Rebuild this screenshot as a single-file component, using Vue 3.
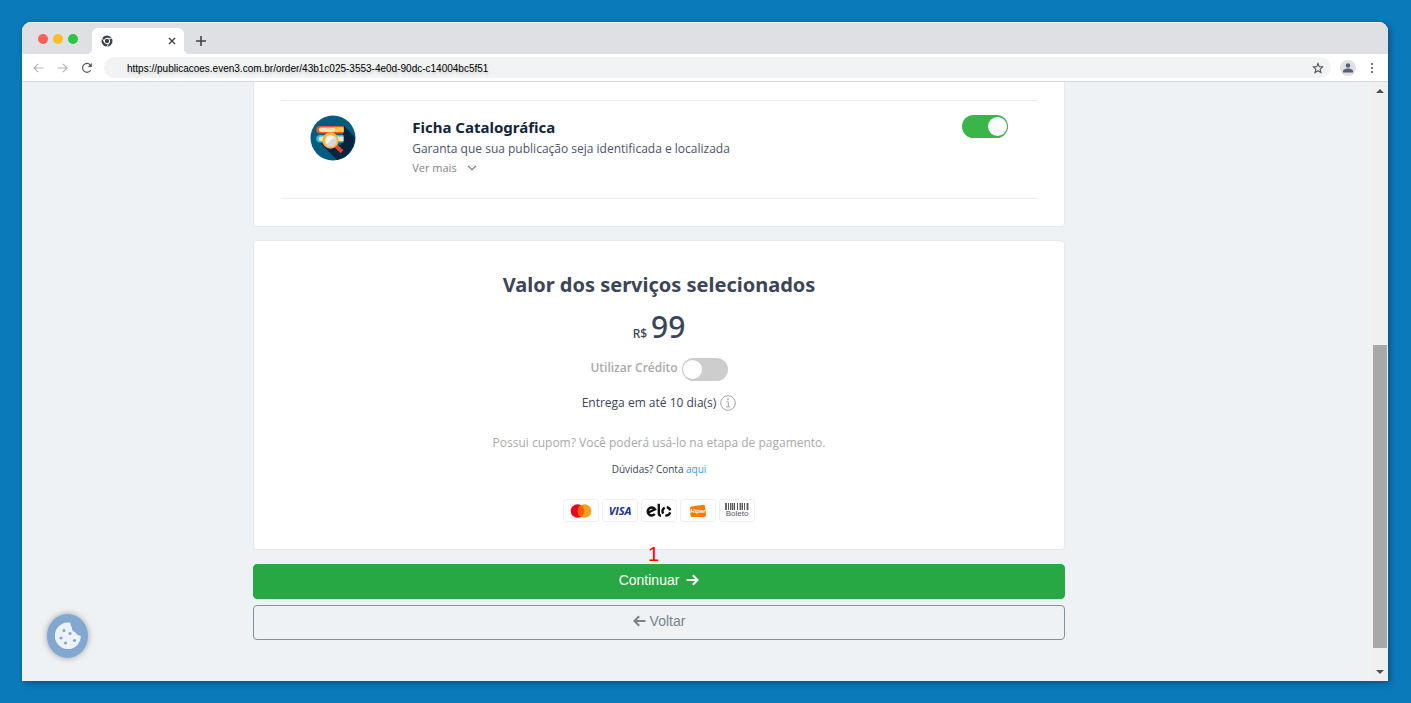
<script setup>
import { ref } from 'vue'

const url = ref('https://publicacoes.even3.com.br/order/43b1c025-3553-4e0d-90dc-c14004bc5f51')
const catalogCard = ref(true)
const useCredit = ref(false)
</script>

<template>
  <div class="desktop">
    <div class="window">
      <header class="tabbar">
        <div class="lights">
          <span class="light red"></span>
          <span class="light yellow"></span>
          <span class="light green"></span>
        </div>
        <div class="tab">
          <svg class="chrome" viewBox="0 0 24 24" aria-hidden="true">
            <circle cx="12" cy="12" r="11" fill="#3f4246" />
            <circle cx="12" cy="12" r="5.4" fill="none" stroke="#fff" stroke-width="2" />
            <path d="M12 6.6H22M7.3 14.8L2.4 6.3M16.7 14.8L11.6 23" stroke="#fff" stroke-width="1.8" />
          </svg>
          <button class="icon-btn" aria-label="Fechar guia">
            <svg width="8" height="8" viewBox="0 0 8 8"><path d="M1 1L7 7M7 1L1 7" stroke="#3f4246" stroke-width="1.4" /></svg>
          </button>
        </div>
        <button class="icon-btn new-tab" aria-label="Nova guia">
          <svg width="10" height="10" viewBox="0 0 10 10"><path d="M5 0V10M0 5H10" stroke="#3f4246" stroke-width="1.6" /></svg>
        </button>
      </header>

      <div class="toolbar">
        <nav class="nav">
          <button class="icon-btn" aria-label="Voltar página">
            <svg width="11" height="10" viewBox="0 0 11 10"><path d="M10.500 5H1.200M5.200 .8L1 5L5.200 9.200" fill="none" stroke="#b4b6b9" stroke-width="1.200" /></svg>
          </button>
          <button class="icon-btn" aria-label="Avançar página">
            <svg width="11" height="10" viewBox="0 0 11 10"><path d="M.5 5H9.800M5.800 .8L10 5L5.800 9.200" fill="none" stroke="#b4b6b9" stroke-width="1.200" /></svg>
          </button>
          <button class="icon-btn" aria-label="Recarregar">
            <svg width="12" height="12" viewBox="0 0 12 12"><path d="M9.700 8.200A4.400 4.400 0 1 1 9.300 3" fill="none" stroke="#55585c" stroke-width="1.200" /><path d="M10.800 1V5H6.800Z" fill="#55585c" /></svg>
          </button>
        </nav>
        <div class="address">
          <input v-model="url" class="url" type="text" aria-label="Endereço" />
          <button class="icon-btn" aria-label="Favoritar">
            <svg width="12" height="12" viewBox="0 0 24 24"><path d="M12 3L14.600 9.300L21.500 9.900L16.300 14.400L17.900 21.100L12 17.500L6.100 21.100L7.700 14.400L2.500 9.900L9.400 9.300Z" fill="none" stroke="#55585c" stroke-width="2.200" /></svg>
          </button>
        </div>
        <button class="icon-btn avatar" aria-label="Perfil">
          <svg width="10" height="10" viewBox="0 0 10 10"><circle cx="5" cy="2.500" r="2.200" fill="#555f78" /><path d="M0 9.500V8C0 6.300 3 5.400 5 5.400S10 6.300 10 8V9.500Z" fill="#555f78" /></svg>
        </button>
        <button class="icon-btn" aria-label="Menu">
          <svg width="4" height="12" viewBox="0 0 4 12"><circle cx="2" cy="2" r="1.100" fill="#55585c" /><circle cx="2" cy="6" r="1.100" fill="#55585c" /><circle cx="2" cy="10" r="1.100" fill="#55585c" /></svg>
        </button>
      </div>

      <div class="viewport">
        <main class="content">
          <section class="card services">
            <article class="service">
              <svg class="service-icon" viewBox="0 0 46 46" aria-hidden="true">
                <circle cx="23" cy="23" r="22.500" fill="#025b80" />
                <path d="M34 11L44.800 22A22.500 22.500 0 0 1 27 45L10 28L31 30Z" fill="#042440" />
                <path d="M10 11H33.500V18.500H10A3.700 3.700 0 0 1 10 11Z" fill="#e8552f" />
                <path d="M11 12.500H33.500V17H11A2.200 2.200 0 0 1 11 12.500Z" fill="#ffe0a6" />
                <path d="M25 12.500H33.500V17H25Z" fill="#ffc84a" />
                <path d="M10 20H33.500V27.500H10A3.700 3.700 0 0 1 10 20Z" fill="#31bfe0" />
                <path d="M11 21.500H33.500V26H11A2.200 2.200 0 0 1 11 21.500Z" fill="#ffe8b8" />
                <path d="M25 30L32 36.800" stroke="#d94b2b" stroke-width="4" />
                <circle cx="20.500" cy="25.500" r="6.800" fill="#f6f4f0" stroke="#ffb52e" stroke-width="2.800" />
                <path d="M25 21L16 30A6 6 0 0 0 25 21Z" fill="#d9d7d8" />
              </svg>
              <div class="service-text">
                <h2><label for="ficha">Ficha Catalográfica</label></h2>
                <p>Garanta que sua publicação seja identificada e localizada</p>
                <button class="more">
                  Ver mais
                  <svg width="10" height="6" viewBox="0 0 10 6"><path d="M1 .8L5 4.800L9 .8" fill="none" stroke="#8a9099" stroke-width="1.500" /></svg>
                </button>
              </div>
              <input id="ficha" v-model="catalogCard" class="toggle" type="checkbox" role="switch" />
            </article>
          </section>

          <section class="card summary">
            <h1>Valor dos serviços selecionados</h1>
            <div class="price"><span class="currency">R$</span><span>99</span></div>
            <div class="credit">
              <label for="credito">Utilizar Crédito</label>
              <input id="credito" v-model="useCredit" class="toggle" type="checkbox" role="switch" />
            </div>
            <p class="delivery">
              Entrega em até 10 dia(s)
              <svg width="16" height="16" viewBox="0 0 16 16" aria-hidden="true"><circle cx="8" cy="8" r="7.300" fill="none" stroke="#a3a3a3" /><path d="M6.300 6.800H8.300V11.800M6 11.800H10.300" fill="none" stroke="#a3a3a3" /><circle cx="8" cy="4.300" r=".9" fill="#a3a3a3" /></svg>
            </p>
            <p class="coupon">Possui cupom? Você poderá usá-lo na etapa de pagamento.</p>
            <p class="help">Dúvidas? Conta <a href="#">aqui</a></p>
            <ul class="payments">
              <li aria-label="Mastercard">
                <svg width="22" height="14" viewBox="0 0 22 14"><circle cx="7.500" cy="7" r="6.800" fill="#eb001b" /><circle cx="14.500" cy="7" r="6.800" fill="#f79e1b" /><path d="M11 1.200A6.800 6.800 0 0 1 11 12.800A6.800 6.800 0 0 1 11 1.200Z" fill="#ff5f00" /></svg>
              </li>
              <li><span class="visa">VISA</span></li>
              <li aria-label="Elo">
                <svg width="26" height="15" viewBox="0 0 26 15" fill="none" stroke="#111" stroke-width="2.400">
                  <path d="M1.800 9.800L9 6.200A4 4 0 1 0 8.800 11" />
                  <path d="M12.800 .8V10.200Q12.800 12.500 15 12.700" />
                  <path d="M17.200 10.600A4.200 4.200 0 0 1 18.700 4.600M20.800 4.300A4.200 4.200 0 0 1 24.200 7.300M24.200 9.400A4.200 4.200 0 0 1 19.300 12.400" />
                </svg>
              </li>
              <li class="hiper">
                <svg width="18" height="14" viewBox="0 0 18 14" aria-hidden="true"><path d="M2.500 2.600L14 .7Q15.700 .5 16 2L17 11Q17 12.700 15.500 12.900H3Q1.600 12.900 1.400 11.500L.9 4.600Q.9 2.900 2.500 2.600Z" fill="#ff7a00" /></svg>
                <span>Hiper</span>
              </li>
              <li class="boleto">
                <svg width="24" height="7" viewBox="0 0 24 7" stroke="#56585b"><path d="M1 0V7M7.500 0V7M15.500 0V7M22.500 0V7" stroke-width="1.800" /><path d="M3.500 0V7M5.500 0V7M9.500 0V7M12.500 0V7M17.500 0V7M19.500 0V7" stroke-width="1" /></svg>
                <span>Boleto</span>
              </li>
            </ul>
          </section>

          <div class="actions">
            <span class="marker">1</span>
            <button class="btn primary">
              Continuar
              <svg width="13" height="12" viewBox="0 0 13 12"><path d="M.5 6H11.500M6.800 1.200L11.600 6L6.800 10.800" fill="none" stroke="currentColor" stroke-width="2" /></svg>
            </button>
            <button class="btn outline">
              <svg width="13" height="12" viewBox="0 0 13 12"><path d="M12.500 6H1.500M6.200 1.200L1.400 6L6.200 10.800" fill="none" stroke="currentColor" stroke-width="2" /></svg>
              Voltar
            </button>
          </div>
        </main>

        <button class="cookie" aria-label="Preferências de cookies">
          <svg width="26" height="28" viewBox="0 0 26 28">
            <path d="M15.500 .8A13 13.300 0 1 0 25.800 14Q22 13.500 20.500 10.500Q16.500 9.500 17 5.500Q15 3.500 15.500 .8Z" fill="#edf2f6" />
            <g fill="#82a8d1"><circle cx="9" cy="8.500" r="1.600" /><circle cx="15" cy="11.500" r="1.600" /><circle cx="6" cy="16" r="1.600" /><circle cx="10.500" cy="21" r="1.600" /><circle cx="19.500" cy="18.500" r="1.600" /></g>
          </svg>
        </button>

        <div class="scrollbar" aria-hidden="true">
          <svg class="arrow" viewBox="0 0 16 17"><path d="M4 11L8 7L12 11Z" fill="#505050" /></svg>
          <span class="before"></span>
          <span class="thumb"></span>
          <span class="after"></span>
          <svg class="arrow" viewBox="0 0 16 17"><path d="M4 6L8 10L12 6Z" fill="#505050" /></svg>
        </div>
      </div>
    </div>
  </div>
</template>

<style>
body {
  margin: 0;
}
</style>

<style scoped>
* {
  box-sizing: border-box;
}
h1, h2, p, ul {
  margin: 0;
  padding: 0;
}
button {
  font-family: inherit;
  cursor: pointer;
}
svg {
  display: block;
  flex: none;
}
.desktop {
  display: flex;
  min-height: 100vh;
  padding: 22px 23px 22px 22px;
  background: #0b7aba;
  font-family: "Open Sans", "Noto Sans", sans-serif;
}
.window {
  flex: 1;
  display: flex;
  flex-direction: column;
  overflow: hidden;
  border-radius: 9px 9px 0 0;
  background: #fff;
  box-shadow: 2px 2px 6px rgba(0, 0, 0, 0.35);
}
.icon-btn {
  display: flex;
  align-items: center;
  justify-content: center;
  padding: 0;
  border: 0;
  background: none;
}
.tabbar {
  display: flex;
  height: 32px;
  border-top: 1px solid #eff0f2;
  background: #dee0e4;
}
.lights {
  display: flex;
  gap: 5px;
  padding: 11px 14px 0 16px;
}
.light {
  width: 10px;
  height: 10px;
  border-radius: 50%;
}
.red { background: #ff5f57; }
.yellow { background: #febb2e; }
.green { background: #28c840; }
.tab {
  position: relative;
  display: flex;
  align-items: center;
  justify-content: space-between;
  width: 92px;
  margin-top: 5px;
  padding: 0 8px 0 9px;
  border-radius: 6px 6px 0 0;
  background: #fff;
}
.tab::before,
.tab::after {
  content: "";
  position: absolute;
  bottom: 0;
  width: 5px;
  height: 5px;
}
.tab::before {
  right: 100%;
  background: radial-gradient(circle at 0 0, #dee0e4 5px, #fff 5px);
}
.tab::after {
  left: 100%;
  background: radial-gradient(circle at 100% 0, #dee0e4 5px, #fff 5px);
}
.chrome {
  width: 12px;
  height: 12px;
}
.new-tab {
  margin: 5px 0 0 12px;
}
.toolbar {
  display: flex;
  align-items: center;
  height: 28px;
  padding-right: 14px;
  border-bottom: 1px solid #d5d7d9;
}
.nav {
  display: flex;
  align-items: center;
  gap: 13px;
  width: 82px;
  padding-left: 11px;
}
.address {
  flex: 1;
  display: flex;
  align-items: center;
  height: 21px;
  margin-right: 9px;
  padding: 0 7px 0 23px;
  border-radius: 11px;
  background: #f1f3f5;
}
.url {
  flex: 1;
  min-width: 0;
  padding: 2px 0 0;
  border: 0;
  outline: 0;
  background: none;
  color: #000;
  font: 10px/18px "Liberation Sans", Arial, sans-serif;
  text-shadow: 1px 2px 2px rgba(0, 0, 0, 0.15);
}
.avatar {
  width: 16px;
  height: 16px;
  margin-right: 14px;
  border-radius: 50%;
  background: #dee0e4;
}
.viewport {
  position: relative;
  flex: 1;
  display: flex;
  justify-content: space-between;
  background: #eef2f5;
}
.content {
  width: calc(60% - 8px);
  margin-left: calc(17% - 1px);
}
.card {
  border: 1px solid #e6eaef;
  border-radius: 4px;
  background: #fff;
}
.services {
  padding: 18px 27px 27px;
  border-top: 0;
  border-radius: 0 0 4px 4px;
}
.service {
  display: flex;
  align-items: flex-start;
  height: 99px;
  padding: 14px 29px 0;
  border-top: 1px solid #e8ecf0;
  border-bottom: 1px solid #e8ecf0;
}
.service-icon {
  width: 46px;
  height: 46px;
}
.service-text {
  flex: 1;
  margin-left: 56px;
}
h1, h2, .price {
  font-family: "Noto Sans", "Open Sans", sans-serif;
}
h2 {
  color: #12263a;
  font-size: 15px;
  font-weight: 700;
  line-height: 24px;
}
.service-text p {
  color: #4a5568;
  font-size: 12px;
  line-height: 20px;
}
.more {
  display: flex;
  align-items: center;
  gap: 10px;
  padding: 0;
  border: 0;
  background: none;
  color: #838383;
  font-size: 11px;
  line-height: 18px;
}
.toggle {
  appearance: none;
  flex: none;
  display: flex;
  align-items: center;
  width: 46px;
  height: 23px;
  margin: 0;
  padding: 1px;
  border-radius: 12px;
  background: #cdcdcd;
}
.toggle::before {
  content: "";
  width: 19px;
  height: 19px;
  border-radius: 50%;
  background: #fff;
}
.toggle:checked {
  justify-content: flex-end;
  background: #39b54a;
}
.summary {
  display: flex;
  flex-direction: column;
  align-items: center;
  margin-top: 13px;
  padding: 26px 16px 27px;
  color: #3b4558;
}
h1 {
  font-size: 20px;
  font-weight: 700;
  line-height: 36px;
}
.price {
  display: flex;
  align-items: baseline;
  gap: 4px;
  height: 48px;
  font-size: 30px;
  font-weight: 500;
  line-height: 48px;
}
.currency {
  font-size: 12px;
}
.credit {
  display: flex;
  gap: 4px;
  margin-top: 7px;
  color: #a9a9a9;
  font-size: 12px;
  font-weight: 600;
  line-height: 20px;
}
.delivery {
  display: flex;
  align-items: center;
  gap: 4px;
  margin-top: 11px;
  font-size: 12px;
  line-height: 22px;
}
.coupon {
  margin-top: 19px;
  color: #a9a9a9;
  font-size: 12px;
  line-height: 20px;
}
.help {
  margin-top: 8px;
  font-size: 10px;
  line-height: 16px;
}
.help a {
  color: #3f97f6;
  text-decoration: none;
}
.payments {
  display: flex;
  gap: 3px;
  margin-top: 22px;
  list-style: none;
}
.payments li {
  display: flex;
  flex-direction: column;
  align-items: center;
  justify-content: center;
  width: 36px;
  height: 23px;
  border: 1px solid #efefef;
  border-radius: 3px;
}
.visa {
  color: #20308c;
  font: italic 700 11px/14px "Open Sans", sans-serif;
}
.payments .hiper {
  display: grid;
  place-content: center;
  place-items: center;
}
.hiper > * {
  grid-area: 1 / 1;
}
.hiper span {
  color: #fff;
  font: italic 700 6px/8px "Liberation Sans", sans-serif;
}
.boleto span {
  color: #56585b;
  font: 8px/8px "Liberation Sans", sans-serif;
}
.actions {
  position: relative;
  display: flex;
  flex-direction: column;
  gap: 6px;
  margin-top: 14px;
  font-family: "Liberation Sans", Arial, sans-serif;
}
.marker {
  position: absolute;
  top: -21px;
  left: 50%;
  margin-left: -11px;
  color: #f00;
  font-size: 20px;
  line-height: 22px;
}
.btn {
  display: flex;
  align-items: center;
  justify-content: center;
  height: 35px;
  padding-bottom: 4px;
  border-radius: 4px;
  font-size: 14px;
  line-height: 20px;
}
.primary {
  gap: 7px;
  border: 1px solid #28a745;
  background: #28a745;
  color: #fff;
}
.outline {
  gap: 4px;
  border: 1px solid #868e96;
  background: transparent;
  color: #7a828a;
}
.cookie {
  position: absolute;
  bottom: 23px;
  left: 25px;
  display: flex;
  align-items: center;
  justify-content: center;
  width: 41px;
  height: 44px;
  padding: 0;
  border: 0;
  border-radius: 50%;
  background: #82a8d1;
  box-shadow: 0 0 6px rgba(0, 0, 0, 0.35);
}
.scrollbar {
  display: flex;
  flex-direction: column;
  width: 16px;
  background: #f0f0f0;
}
.arrow {
  width: 16px;
  height: 17px;
}
.before { flex: 246; }
.thumb {
  flex: 303;
  margin: 0 1px 0 1px;
  background: #a8a8a8;
}
.after { flex: 16; }
</style>
